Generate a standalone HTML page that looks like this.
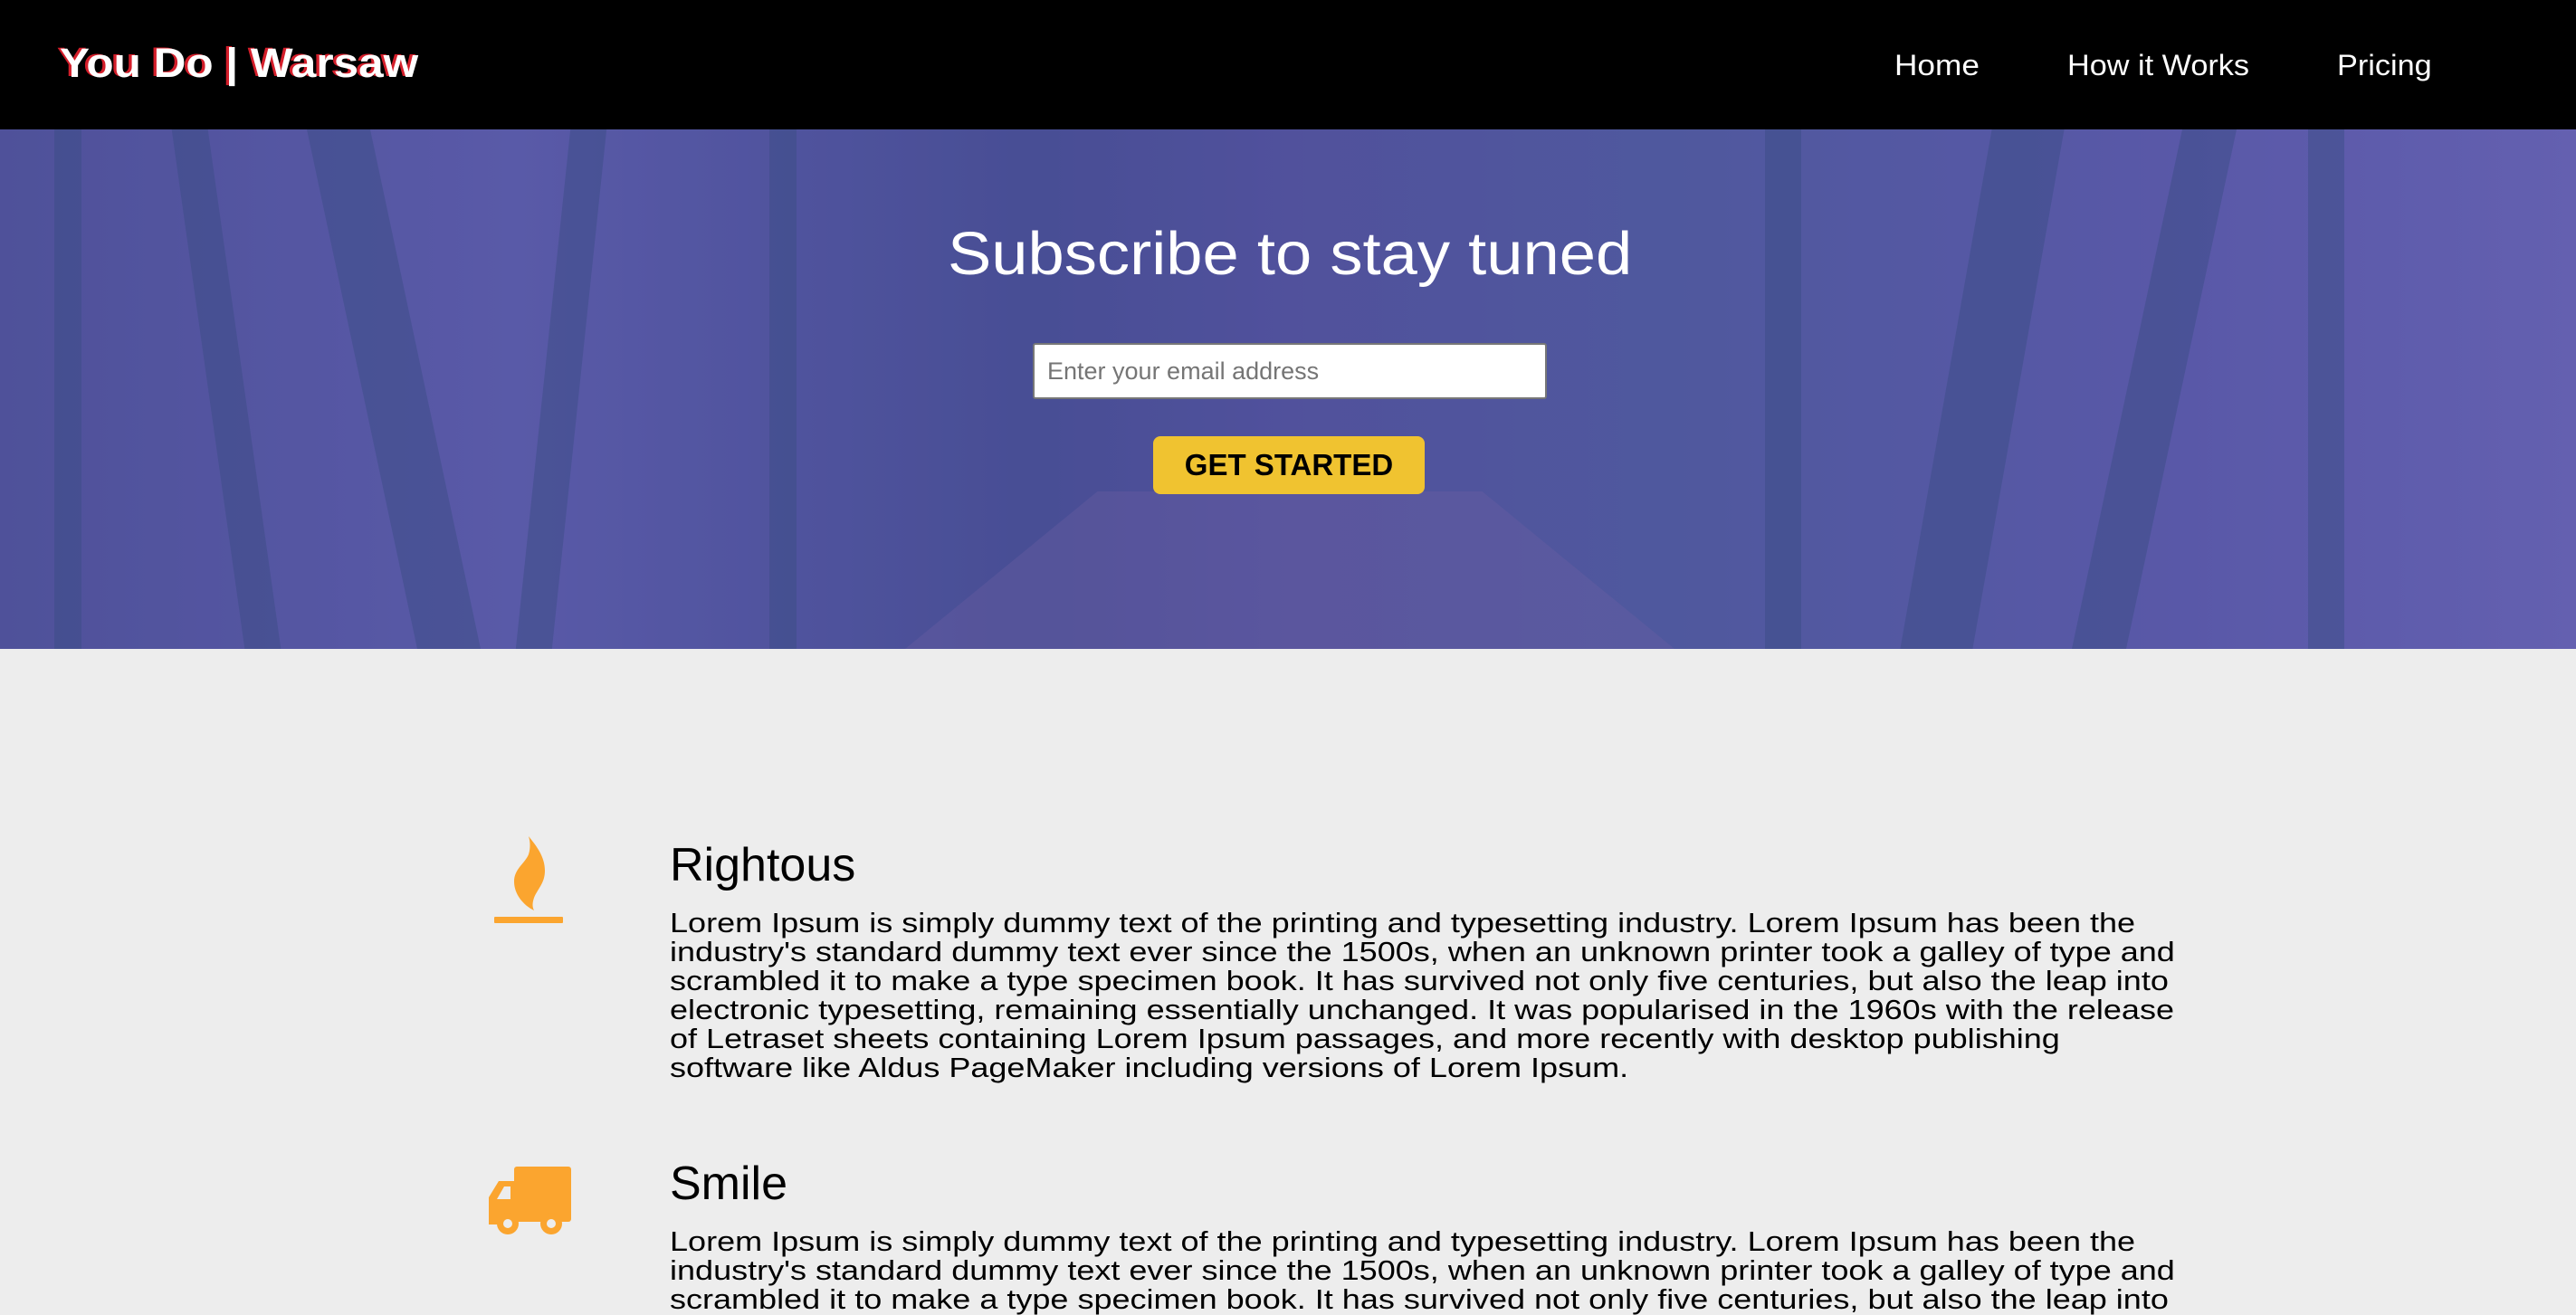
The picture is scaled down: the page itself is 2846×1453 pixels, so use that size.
<!DOCTYPE html>
<html><head><meta charset="utf-8"><style>
*{margin:0;padding:0;box-sizing:border-box}
body{width:2846px;height:1446px;overflow:hidden;background:#ededed;font-family:"Liberation Sans",sans-serif;position:relative}
.a{position:absolute;white-space:nowrap}
.sx{transform-origin:0 0}
#hdr{position:absolute;left:0;top:0;width:2846px;height:143px;background:#000}
#hero{position:absolute;left:0;top:143px;width:2846px;height:574px;overflow:hidden;
background:linear-gradient(90deg,#4a4f92 0%,#5a5ca8 20%,#3f4a8a 40%,#4d4f96 50%,#4b5a98 65%,#5a5aa8 85%,#6a66b4 100%)}
.st{position:absolute;top:0;height:574px;background:rgba(40,70,110,.45)}
p.t{font-size:31px;line-height:32px;color:#000}
</style></head><body>
<div id="hdr"></div>
<div class="a sx" style="left:66px;top:44px;font-size:45px;font-weight:bold;color:#fff;text-shadow:-3px -1px 0 #d41e2a;transform:scaleX(1.1)">You Do | Warsaw</div>
<div class="a sx" style="left:2093px;top:54px;font-size:32px;color:#fff;transform:scaleX(1.1)">Home</div>
<div class="a sx" style="left:2284px;top:54px;font-size:32px;color:#fff;transform:scaleX(1.07)">How it Works</div>
<div class="a sx" style="left:2582px;top:54px;font-size:32px;color:#fff;transform:scaleX(1.07)">Pricing</div>

<div id="hero">
<div class="st" style="left:60px;width:30px"></div>
<div class="st" style="left:230px;width:40px;transform:skewX(8deg)"></div>
<div class="st" style="left:400px;width:70px;transform:skewX(12deg)"></div>
<div class="st" style="left:600px;width:40px;transform:skewX(-6deg)"></div>
<div class="st" style="left:850px;width:30px"></div>
<div class="st" style="left:1950px;width:40px"></div>
<div class="st" style="left:2150px;width:80px;transform:skewX(-10deg)"></div>
<div class="st" style="left:2350px;width:60px;transform:skewX(-12deg)"></div>
<div class="st" style="left:2550px;width:40px"></div>
<div style="position:absolute;left:1000px;top:400px;width:850px;height:174px;background:rgba(120,100,160,.35);clip-path:polygon(25% 0,75% 0,100% 100%,0 100%)"></div>
<div style="position:absolute;left:0;top:0;width:2846px;height:574px;background:rgba(90,85,170,.35)"></div>
</div>
<div class="a sx" style="left:1047px;top:242px;font-size:67px;color:#fff;transform:scaleX(1.08)">Subscribe to stay tuned</div>
<div class="a" style="left:1141px;top:379px;width:568px;height:62px;background:#fff;border:2px solid #777;border-radius:3px"></div>
<div class="a" style="left:1157px;top:395px;font-size:27px;color:#757575">Enter your email address</div>
<div class="a" style="left:1274px;top:482px;width:300px;height:64px;background:#f0c330;border-radius:8px;font-size:33px;font-weight:bold;color:#000;text-align:center;line-height:64px">GET STARTED</div>

<svg class="a" style="left:540px;top:920px" width="90" height="102" viewBox="0 0 90 102">
<path d="M44 4 C52 14 62 26 62 42 C62 56 54 62 50 72 C48 78 48 82 50 86 C38 80 28 68 28 54 C28 40 40 34 44 24 C46 18 46 10 44 4Z" fill="#fba52f"/>
<rect x="6" y="93" width="76" height="7" rx="1" fill="#fba52f"/>
</svg>
<div class="a" style="left:740px;top:926px;font-size:52px;color:#000">Rightous</div>
<div class="a sx" style="left:740px;top:1004px;transform:scaleX(1.162)">
<p class="t">Lorem Ipsum is simply dummy text of the printing and typesetting industry. Lorem Ipsum has been the<br>industry's standard dummy text ever since the 1500s, when an unknown printer took a galley of type and<br>scrambled it to make a type specimen book. It has survived not only five centuries, but also the leap into<br>electronic typesetting, remaining essentially unchanged. It was popularised in the 1960s with the release<br>of Letraset sheets containing Lorem Ipsum passages, and more recently with desktop publishing<br>software like Aldus PageMaker including versions of Lorem Ipsum.</p></div>

<svg class="a" style="left:537px;top:1289px" width="94" height="78" viewBox="0 0 94 78">
<rect x="31" y="0" width="63" height="61" rx="3" fill="#fba52f"/>
<path d="M3 64 L3 34 L14 16 L34 16 L34 64Z" fill="#fba52f"/>
<path d="M12 36 L20 22 L27 22 L27 36Z" fill="#ededed"/>
<circle cx="24" cy="63" r="12" fill="#fba52f"/><circle cx="24" cy="63" r="5" fill="#ededed"/>
<circle cx="72" cy="63" r="12" fill="#fba52f"/><circle cx="72" cy="63" r="5" fill="#ededed"/>
</svg>
<div class="a" style="left:740px;top:1278px;font-size:52px;color:#000">Smile</div>
<div class="a sx" style="left:740px;top:1356px;transform:scaleX(1.162)">
<p class="t">Lorem Ipsum is simply dummy text of the printing and typesetting industry. Lorem Ipsum has been the<br>industry's standard dummy text ever since the 1500s, when an unknown printer took a galley of type and<br>scrambled it to make a type specimen book. It has survived not only five centuries, but also the leap into</p></div>
</body></html>
